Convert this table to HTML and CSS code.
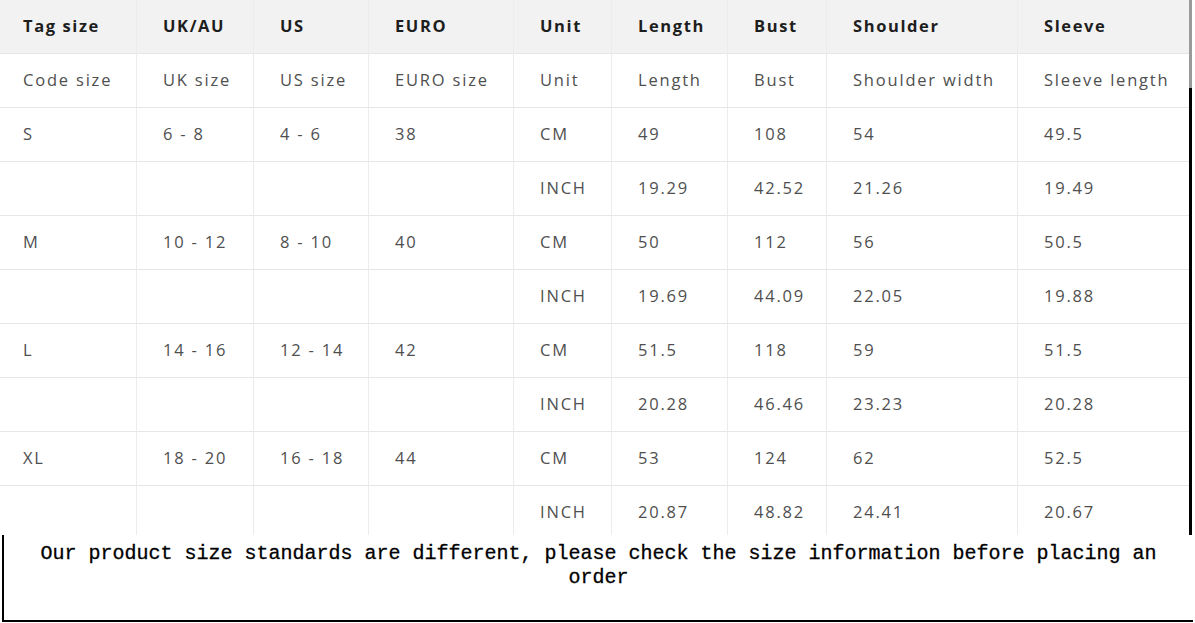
FILE: index.html
```html
<!DOCTYPE html>
<html>
<head>
<meta charset="utf-8">
<link rel="stylesheet" href="styles.css">
</head>
<body>
<div class="page">
  <div class="table-wrap">
    <div class="grid">
      <div class="cell head">Tag size</div><div class="cell head">UK/AU</div><div class="cell head">US</div><div class="cell head">EURO</div><div class="cell head">Unit</div><div class="cell head">Length</div><div class="cell head">Bust</div><div class="cell head">Shoulder</div><div class="cell head">Sleeve</div>

      <div class="cell">Code size</div><div class="cell">UK size</div><div class="cell">US size</div><div class="cell">EURO size</div><div class="cell">Unit</div><div class="cell">Length</div><div class="cell">Bust</div><div class="cell">Shoulder width</div><div class="cell">Sleeve length</div>

      <div class="cell">S</div><div class="cell">6 - 8</div><div class="cell">4 - 6</div><div class="cell">38</div><div class="cell">CM</div><div class="cell">49</div><div class="cell">108</div><div class="cell">54</div><div class="cell">49.5</div>
      <div class="cell"></div><div class="cell"></div><div class="cell"></div><div class="cell"></div><div class="cell">INCH</div><div class="cell">19.29</div><div class="cell">42.52</div><div class="cell">21.26</div><div class="cell">19.49</div>

      <div class="cell">M</div><div class="cell">10 - 12</div><div class="cell">8 - 10</div><div class="cell">40</div><div class="cell">CM</div><div class="cell">50</div><div class="cell">112</div><div class="cell">56</div><div class="cell">50.5</div>
      <div class="cell"></div><div class="cell"></div><div class="cell"></div><div class="cell"></div><div class="cell">INCH</div><div class="cell">19.69</div><div class="cell">44.09</div><div class="cell">22.05</div><div class="cell">19.88</div>

      <div class="cell">L</div><div class="cell">14 - 16</div><div class="cell">12 - 14</div><div class="cell">42</div><div class="cell">CM</div><div class="cell">51.5</div><div class="cell">118</div><div class="cell">59</div><div class="cell">51.5</div>
      <div class="cell"></div><div class="cell"></div><div class="cell"></div><div class="cell"></div><div class="cell">INCH</div><div class="cell">20.28</div><div class="cell">46.46</div><div class="cell">23.23</div><div class="cell">20.28</div>

      <div class="cell">XL</div><div class="cell">18 - 20</div><div class="cell">16 - 18</div><div class="cell">44</div><div class="cell">CM</div><div class="cell">53</div><div class="cell">124</div><div class="cell">62</div><div class="cell">52.5</div>
      <div class="cell"></div><div class="cell"></div><div class="cell"></div><div class="cell"></div><div class="cell">INCH</div><div class="cell">20.87</div><div class="cell">48.82</div><div class="cell">24.41</div><div class="cell">20.67</div>
    </div>
    <div class="edge"></div>
  </div>
  <div class="note">Our product size standards are different, please check the size information before placing an order</div>
</div>
</body>
</html>
```

FILE: styles.css
```css
html, body {
  margin: 0;
  padding: 0;
  background: #ffffff;
}

.page {
  width: 1195px;
  height: 623px;
  overflow: hidden;
}

.table-wrap {
  position: relative;
  height: 535px;
  overflow: hidden;
}

.grid {
  display: grid;
  grid-template-columns: 137px 117px 115px 145px 98px 116px 99px 191px 172px;
  grid-auto-rows: 54px;
  width: 1190px;
  font-family: "Open Sans", "Liberation Sans", sans-serif;
  font-size: 16.5px;
  letter-spacing: 1.8px;
  color: #4f4f4f;
}

.cell {
  display: flex;
  align-items: center;
  box-sizing: border-box;
  padding-left: 26px;
  padding-bottom: 2px;
  border-right: 1px solid #ececec;
  border-bottom: 1px solid #e6e6e6;
  white-space: nowrap;
}

.cell:nth-child(9n+1) {
  padding-left: 23px;
}

.cell:nth-child(9n) {
  border-right: none;
}

.head {
  background: #f2f2f2;
  color: #1e1e1e;
  font-weight: 700;
  letter-spacing: 1.6px;
}

.edge {
  position: absolute;
  right: 3px;
  top: 0;
  width: 3px;
  height: 535px;
  background: linear-gradient(to bottom, #9a9a9a 0, #9a9a9a 88px, #000000 88px, #000000 100%);
}

.note {
  height: 87px;
  margin-left: 2px;
  width: 1191px;
  border-left: 2px solid #000000;
  border-bottom: 2px solid #000000;
  box-sizing: border-box;
  padding: 7px 34px 0 34px;
  text-align: center;
  font-family: "Liberation Mono", "DejaVu Sans Mono", monospace;
  font-size: 20px;
  line-height: 24px;
  color: #000000;
  -webkit-text-stroke: 0.3px #000000;
}
```
